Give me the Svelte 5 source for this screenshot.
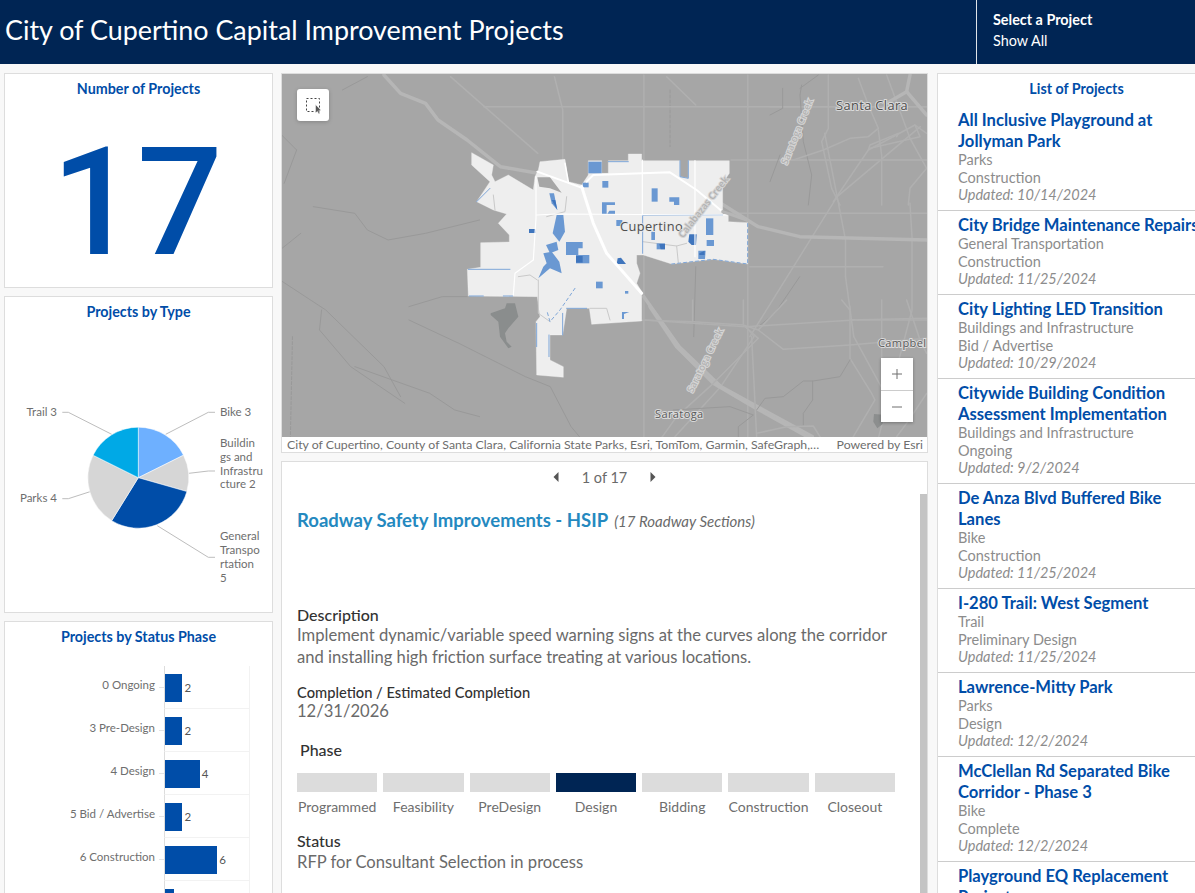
<script lang="ts">
	const navy = '#002554';

	// pie slices, clockwise from 12 o'clock
	const slices = [
		{ value: 3, color: '#6eb0ff' },
		{ value: 2, color: '#d6d6d6' },
		{ value: 5, color: '#004da8' },
		{ value: 4, color: '#d6d6d6' },
		{ value: 3, color: '#00a9e6' }
	];
	const cx = 138.3;
	const cy = 477.7;
	const r = 50.5;
	const total = slices.reduce((sum, s) => sum + s.value, 0);

	function slicePath(start: number, value: number) {
		const a0 = (start / total) * Math.PI * 2;
		const a1 = ((start + value) / total) * Math.PI * 2;
		const large = value / total > 0.5 ? 1 : 0;
		const x0 = cx + r * Math.sin(a0);
		const y0 = cy - r * Math.cos(a0);
		const x1 = cx + r * Math.sin(a1);
		const y1 = cy - r * Math.cos(a1);
		return `M${cx} ${cy}L${x0} ${y0}A${r} ${r} 0 ${large} 1 ${x1} ${y1}Z`;
	}

	let acc = 0;
	const pie = slices.map((s) => {
		const d = slicePath(acc, s.value);
		acc += s.value;
		return { d, color: s.color };
	});

	const leaders = [
		'165.7,434.3 208.3,412.3 215,412.3',
		'189,473.3 208.3,471 215,471',
		'157.3,525.7 208.3,557.3 215,557.3',
		'90,491.7 68.3,498.7 62.3,498.7',
		'111.7,434.3 68.3,412.3 62.3,412.3'
	];

	const phases = [
		{ label: '0 Ongoing', value: 2 },
		{ label: '3 Pre-Design', value: 2 },
		{ label: '4 Design', value: 4 },
		{ label: '5 Bid / Advertise', value: 2 },
		{ label: '6 Construction', value: 6 },
		{ label: '7 Complete', value: 1 }
	];

	const steps = ['Programmed', 'Feasibility', 'PreDesign', 'Design', 'Bidding', 'Construction', 'Closeout'];

	const projects = [
		{ title: 'All Inclusive Playground at Jollyman Park', type: 'Parks', status: 'Construction', updated: '10/14/2024' },
		{ title: 'City Bridge Maintenance Repairs', type: 'General Transportation', status: 'Construction', updated: '11/25/2024' },
		{ title: 'City Lighting LED Transition', type: 'Buildings and Infrastructure', status: 'Bid / Advertise', updated: '10/29/2024' },
		{ title: 'Citywide Building Condition Assessment Implementation', type: 'Buildings and Infrastructure', status: 'Ongoing', updated: '9/2/2024' },
		{ title: 'De Anza Blvd Buffered Bike Lanes', type: 'Bike', status: 'Construction', updated: '11/25/2024' },
		{ title: 'I-280 Trail: West Segment', type: 'Trail', status: 'Preliminary Design', updated: '11/25/2024' },
		{ title: 'Lawrence-Mitty Park', type: 'Parks', status: 'Design', updated: '12/2/2024' },
		{ title: 'McClellan Rd Separated Bike Corridor - Phase 3', type: 'Bike', status: 'Complete', updated: '12/2/2024' },
		{ title: 'Playground EQ Replacement Project', type: 'Parks', status: 'Construction', updated: '12/2/2024' }
	];

	// basemap lines, traced from crops of the map at different scales
	const wideMajor = [
		'250,15 290,70 350,100 380,150 450,210 530,290 620,310',
		'1060,400 1150,470 1250,500 1560,510',
		'875,680 960,830 1060,950 1280,1100'
	];
	const wideMinor = [
		'490,110 1560,110',
		'660,20 680,120 680,270',
		'875,15 875,1100',
		'1125,15 1125,1100',
		'930,20 1000,105',
		'1085,270 1560,270',
		'1080,430 1560,430',
		'875,750 1120,770 1380,750 1560,750',
		'1120,770 1140,800 1060,950 950,1100',
		'1310,190 1340,380 1360,510 1360,620 1380,800 1450,960',
		'1540,170 1340,380 1130,800',
		'1130,590 1450,590',
		'1515,400 1520,500 1520,720 1440,1100',
		'410,20 620,250'
	];
	const wideThin = [
		'0,630 110,720 250,890 290,980',
		'80,410 180,430 210,480 260,510 350,490 480,450',
		'0,540 50,490',
		'100,720 95,780 170,890 300,1000',
		'310,710 390,680 450,680',
		'310,750 430,820 590,920 650,950 700,1070 720,1100',
		'0,190 40,240 10,340',
		'150,60 210,20',
		'1250,620 1190,730 1150,770',
		'1000,590 995,800',
		'180,890 360,970 420,1020 480,1040'
	];

	const cityPoints =
		'65,38 130,75 125,105 135,125 175,105 250,150 255,110 265,90 270,65 345,58 355,125 395,135 415,105 415,62 455,62 455,100 475,100 475,62 535,62 535,42 575,42 575,62 690,62 690,110 715,115 715,62 838,62 838,100 818,130 818,222 835,222 835,245 893,248 893,372 790,358 665,372 580,345 560,345 560,370 570,400 560,430 575,455 575,543 425,553 418,505 350,505 338,585 300,585 300,660 340,680 340,712 260,705 258,545 270,530 262,470 55,468 52,388 92,382 92,308 178,306 178,285 145,250 170,222 130,210 80,185 120,125 65,75';

	const blocks = [
		'415,65 455,65 455,100 415,100',
		'457,123 475,123 475,143 457,143',
		'605,145 623,145 623,185 605,185',
		'658,172 688,172 688,195 672,195 672,185 658,185',
		'456,187 495,187 495,195 470,195 470,222 456,222',
		'478,212 495,212 495,222 472,222',
		'499,240 517,240 517,258 499,258',
		'768,235 790,235 790,285 768,285',
		'770,300 792,300 792,318 770,318',
		'604,275 615,275 615,300 604,300',
		'620,310 645,310 645,328 620,328',
		'745,332 767,332 765,357 745,357',
		'298,160 312,160 322,210 305,190',
		'320,225 340,225 345,275 328,305 308,280',
		'348,306 398,306 398,325 385,325 385,345 348,345',
		'378,345 418,345 418,370 378,370',
		'288,315 320,305 325,330 300,340',
		'280,340 305,335 328,365 335,400 300,385 265,415 280,380 290,370',
		'438,425 458,425 458,445 438,445',
		'525,453 535,453 535,461 525,461',
		'516,516 538,516 522,522 522,537 516,537',
		'398,128 416,128 416,142 398,142'
	];
	const darkBlocks = [
		'237,267 257,267 257,279 237,279',
		'305,180 316,180 322,210',
		'378,348 398,348 398,368 378,368',
		'503,355 513,353 528,372 500,372',
		'718,283 740,283 738,315 725,315 715,305',
		'748,340 764,332 764,345 748,345',
		'628,312 645,312 645,328 632,328'
	];
</script>

<div class="page">
	<header class="topbar">
		<h1>City of Cupertino Capital Improvement Projects</h1>
		<div class="selector">
			<div class="selector-title">Select a Project</div>
			<div class="selector-value">Show All</div>
		</div>
	</header>

	<main class="layout">
		<section class="col-left">
			<div class="card count-card">
				<h2 class="card-title">Number of Projects</h2>
				<div class="big-number">17</div>
			</div>

			<div class="card pie-card">
				<h2 class="card-title">Projects by Type</h2>
				<svg class="pie" viewBox="5 329 267 283" width="267" height="283">
					{#each leaders as line}
						<polyline points={line} fill="none" stroke="#bdbdbd" stroke-width="1" />
					{/each}
					{#each pie as slice}
						<path d={slice.d} fill={slice.color} stroke="#fff" stroke-width="0.5" />
					{/each}
					<text x="220" y="416">Bike 3</text>
					<text x="220" y="447">Buildin</text>
					<text x="220" y="461">gs and</text>
					<text x="220" y="475">Infrastru</text>
					<text x="220" y="488">cture 2</text>
					<text x="220" y="540">General</text>
					<text x="220" y="554">Transpo</text>
					<text x="220" y="568">rtation</text>
					<text x="220" y="582">5</text>
					<text x="57" y="502" text-anchor="end">Parks 4</text>
					<text x="57" y="416" text-anchor="end">Trail 3</text>
				</svg>
			</div>

			<div class="card bars-card">
				<h2 class="card-title">Projects by Status Phase</h2>
				<div class="bars">
					{#each phases as row}
						<div class="bar-row">
							<div class="bar-label">{row.label}</div>
							<div class="bar-plot">
								<div class="bar" style="width: {row.value * 8.7}px"></div>
								<span class="bar-value">{row.value}</span>
							</div>
						</div>
					{/each}
				</div>
			</div>
		</section>

		<section class="col-center">
			<div class="map">
				<svg class="basemap" viewBox="282 74 645 363" width="645" height="363">
					<rect x="282" y="74" width="645" height="363" fill="#a6a6a6" />

					<g transform="translate(280 70) scale(.4158 .3333)" fill="none">
						{#each wideThin as p}<polyline class="thin" points={p} />{/each}
						<polyline class="thin dashed" points="30,800 25,1100" />
						<polyline class="thin dashed" points="938,60 938,230" />
						{#each wideMinor as p}<polyline class="minor" points={p} />{/each}
						{#each wideMajor as p}<polyline class="major" points={p} />{/each}
					</g>

					<g transform="translate(640 300) scale(.3333)" fill="none">
						<polyline class="major" points="30,20 110,140 220,250 340,320 520,420" />
						<polyline class="minor" points="310,0 310,75 355,115 220,250 110,350 60,420" />
						<polyline class="minor" points="0,60 160,65 310,75 355,90 430,148 630,135 860,115" />
						<polyline class="minor" points="335,110 350,410" />
						<polyline class="minor" points="630,20 630,175 695,280 705,300 640,410" />
						<polyline class="minor" points="605,0 630,30" />
						<polyline class="minor" points="630,60 860,55" />
						<polyline class="minor" points="725,0 725,180" />
						<polyline class="minor" points="800,0 840,120 860,160" />
						<polyline class="minor" points="440,0 355,90" />
						<polyline class="minor" points="158,0 158,65" />
						<polyline class="thin" points="630,180 600,230 520,243 490,243 430,290 375,295 350,330" />
						<polyline class="thin" points="518,243 518,300 490,340 490,375" />
						<polyline class="thin" points="100,330 270,320 340,345 295,380 295,410" />
						<polyline class="minor" points="350,400 440,380 520,378 540,410" />
						<polyline class="minor" points="860,280 800,370 770,410" />
						<path d="M702 342 L730 344 L728 372 L712 385 L700 365 Z" fill="#8c8e8e" />
					</g>

					<g transform="translate(770 75) scale(.3333)" fill="none">
						<polyline class="minor" points="0,95 470,95" />
						<polyline class="minor" points="175,0 175,160 155,200 185,340 210,390" />
						<polyline class="thin" points="95,30 90,60 100,200 125,300 115,390" />
						<polyline class="thin" points="145,0 90,40" />
						<polyline class="minor" points="0,255 70,255 160,225 240,190 295,185 325,160 295,90 265,10" />
						<polyline class="minor" points="325,165 335,240 335,390" />
						<polyline class="minor" points="190,380 295,225 435,150 470,175" />
						<polyline class="minor" points="295,225 300,210 385,175 380,185" />
						<polyline class="minor" points="435,150 450,185 300,220" />
						<polyline class="minor" points="350,0 420,190 470,280 420,340 415,390" />
						<polyline class="major" points="420,0 410,50 350,85" />
						<polyline class="major" points="410,50 470,120" />
						<polyline class="thin" points="38,40 38,100 0,120" />
						<polyline class="thin" points="30,240 0,320" />
					</g>

					<g transform="translate(450 140) scale(.3333)">
						<path d="M122 520 L165 505 L170 490 L195 490 L205 530 L175 565 L165 580 L170 605 L185 620 L175 625 L150 590 L145 545 L122 525 Z" fill="#8a8d8d" />
						<polygon points={cityPoints} fill="#eeeeee" stroke="#f6f6f6" stroke-width="1" />
						<path d="M262 112 L300 112 L335 158 L300 145 L268 140 Z" fill="#a6a6a6" />
						<polyline class="road-soft" points="130,165 135,210" />
						<polyline class="road-soft" points="205,410 240,405 262,420" />
						<polyline class="road-soft" points="265,420 265,520 300,545" />
						<polyline class="road-soft" points="578,305 680,318 710,310" />
						<polyline class="road-soft" points="680,318 685,368" />
						<polyline class="road-soft" points="420,505 470,505 480,540" />
						<polyline class="road-soft" points="350,170 345,215 290,230" />
						<polyline class="blue-edge" points="55,388 180,388" />
						<polyline class="blue-edge" points="58,468 100,468" />
						<polyline class="blue-edge" points="160,468 188,468" />
						<polyline class="blue-edge" points="80,185 120,145" />
						<polyline class="blue-edge" points="350,505 410,505" />
						<polyline class="blue-edge" points="338,520 338,585" />
						<polyline class="blue-edge" points="260,550 260,620" />
						<polyline class="blue-edge" points="297,585 297,650" />
						<polyline class="blue-edge" points="475,65 535,65" />
						<polyline class="blue-edge" points="690,62 690,110 715,115 715,62" />
						<polyline class="blue-edge dashed-blue" points="375,445 330,510 300,545 290,510" />
						<polyline class="blue-edge dashed-blue" points="665,372 790,358 893,372 893,250" />
						<polyline class="blue-edge" points="578,225 818,225" />
						<polyline class="blue-edge" points="578,225 578,340" />
						{#each blocks as b}<polygon points={b} fill="#6a98d2" />{/each}
						{#each darkBlocks as b}<polygon points={b} fill="#3f75bd" />{/each}
						<polyline class="road-white" points="395,140 430,250 470,340 575,460" stroke-width="3" />
						<polyline class="road-white" points="262,95 345,125 400,145" stroke-width="2" />
						<polyline class="road-white" points="410,125 430,105 660,97 740,150 818,215" stroke-width="2" />
						<polyline class="road-white" points="260,225 320,222 830,225" stroke-width="1.2" />
						<polyline class="road-white" points="577,60 577,225" stroke-width="1.2" />
						<polyline class="road-white" points="735,62 735,350" stroke-width="1.2" />
						<polyline class="road-white" points="258,110 258,235 250,360 195,400 190,465" stroke-width="1.2" />
						<polyline class="road-white" points="345,70 355,125" stroke-width="1.5" />
						<polyline class="major soft-over" points="818,215 890,240" />
					</g>

					<text class="place" x="836" y="110">Santa Clara</text>
					<text class="place" x="620" y="231">Cupertino</text>
					<text class="place small" x="655" y="418">Saratoga</text>
					<text class="place small" x="878" y="347">Campbel</text>
					<text class="creek" transform="translate(800 133) rotate(-68)">Saratoga Creek</text>
					<text class="creek" transform="translate(708 362) rotate(-64)">Saratoga Creek</text>
					<text class="creek" transform="translate(706 209) rotate(-52)">Calabazas Creek</text>
				</svg>

				<button class="select-tool" aria-label="Select by rectangle">
					<svg viewBox="0 0 32 32" width="32" height="32">
						<rect x="9.5" y="9.5" width="13" height="13" fill="none" stroke="#444" stroke-width="1" stroke-dasharray="2 2" />
						<path d="M18.5 15.5 L18.5 24 L20.4 22.3 L21.7 25 L23 24.3 L21.8 21.7 L24 21.3 Z" fill="#555" stroke="#fff" stroke-width=".5" />
					</svg>
				</button>

				<div class="zoom-tools">
					<button aria-label="Zoom in">
						<svg viewBox="0 0 16 16" width="16" height="16"><path d="M8 3v10M3 8h10" stroke="#6e6e6e" stroke-width="1" fill="none" /></svg>
					</button>
					<button aria-label="Zoom out">
						<svg viewBox="0 0 16 16" width="16" height="16"><path d="M3 8h10" stroke="#6e6e6e" stroke-width="1" fill="none" /></svg>
					</button>
				</div>

				<div class="attribution">
					<span>City of Cupertino, County of Santa Clara, California State Parks, Esri, TomTom, Garmin, SafeGraph,…</span>
					<span>Powered by Esri</span>
				</div>
			</div>

			<div class="details">
				<div class="scroll-thumb"></div>
				<div class="pager">
					<svg viewBox="0 0 8 12" width="8" height="12"><path d="M6.5 1 L1.5 6 L6.5 11 Z" fill="#555" /></svg>
					<span>1 of 17</span>
					<svg viewBox="0 0 8 12" width="8" height="12"><path d="M1.5 1 L6.5 6 L1.5 11 Z" fill="#555" /></svg>
				</div>
				<div class="details-body">
					<div class="project-head">
						<span class="project-name">Roadway Safety Improvements - HSIP</span>
						<em>(17 Roadway Sections)</em>
					</div>

					<h3 class="desc-head">Description</h3>
					<p class="text">Implement dynamic/variable speed warning signs at the curves along the corridor and installing high friction surface treating at various locations.</p>

					<h4 class="completion-head">Completion / Estimated Completion</h4>
					<p class="text">12/31/2026</p>

					<h3 class="phase-head">Phase</h3>
					<div class="steps">
						{#each steps as step}
							<div class="step">
								<div class="step-bar" class:active={step === 'Design'} style:--active={navy}></div>
								<div class="step-label">{step}</div>
							</div>
						{/each}
					</div>

					<h3 class="status-head">Status</h3>
					<p class="text">RFP for Consultant Selection in process</p>
				</div>
			</div>
		</section>

		<section class="col-right">
			<h2 class="card-title">List of Projects</h2>
			<div class="project-list">
				{#each projects as project}
					<article class="project">
						<div class="project-title">{project.title}</div>
						<div class="project-sub type">{project.type}</div>
						<div class="project-sub">{project.status}</div>
						<div class="project-sub updated">Updated: {project.updated}</div>
					</article>
				{/each}
			</div>
		</section>
	</main>
</div>

<style>
	:global(body) {
		margin: 0;
		background: #f8f8f8;
		overflow: hidden;
	}

	.page {
		width: 1195px;
		height: 893px;
		overflow: hidden;
		font-family: Lato, 'Open Sans', sans-serif;
		color: #6a6a6a;
	}

	.topbar {
		height: 64px;
		background: #002554;
		color: #fff;
		display: flex;
		justify-content: space-between;
	}

	h1 {
		margin: 0;
		padding-left: 5px;
		font-size: 26.9px;
		font-weight: 400;
		line-height: 60px;
		white-space: nowrap;
	}

	.selector {
		width: 219px;
		box-sizing: border-box;
		border-left: 1px solid #dfe3e8;
		padding: 9px 0 0 16px;
		font-size: 14.4px;
		line-height: 21px;
	}

	.selector-title {
		font-weight: 700;
	}

	.layout {
		display: grid;
		grid-template-columns: 269px 647px 280px;
		column-gap: 8px;
		padding: 9px 0 0 4px;
		align-items: start;
	}

	.col-left,
	.col-center {
		display: flex;
		flex-direction: column;
		gap: 8px;
	}

	.col-right {
		margin-left: 1px;
		background: #fff;
		border: 1px solid #ddd;
		height: 900px;
		box-sizing: border-box;
	}

	.card {
		background: #fff;
		border: 1px solid #ddd;
		box-sizing: border-box;
		display: flex;
		flex-direction: column;
	}

	.card-title {
		margin: 0;
		height: 32px;
		flex-shrink: 0;
		box-sizing: border-box;
		padding-top: 7px;
		font-size: 14.3px;
		font-weight: 700;
		line-height: 16px;
		text-align: center;
		color: #004da8;
	}

	.count-card {
		height: 215px;
	}

	.big-number {
		flex: 1;
		display: flex;
		align-items: center;
		justify-content: center;
		padding: 12px 3px 0 0;
		font-family: Roboto, sans-serif;
		font-size: 151px;
		line-height: 1;
		font-weight: 500;
		color: #004da8;
	}

	.pie-card {
		height: 317px;
	}

	.pie {
		display: block;
	}

	.pie text {
		font-size: 11.5px;
		fill: #6e6e6e;
	}

	.bars-card {
		height: 320px;
	}

	.bars {
		padding-top: 12px;
	}

	.bar-row {
		display: flex;
		height: 43px;
	}

	.bar-label {
		width: 150px;
		padding-top: 12px;
		font-size: 11.5px;
		line-height: 14px;
		text-align: right;
		color: #6e6e6e;
		white-space: nowrap;
	}

	.bar-plot {
		position: relative;
		margin-left: 9px;
		width: 86px;
		box-sizing: border-box;
		border-left: 1px solid #ddd;
		border-right: 1px solid #f2f2f2;
		border-bottom: 1px solid #f2f2f2;
		padding-top: 8px;
		display: flex;
		align-items: flex-start;
		gap: 2px;
	}

	.bar-plot::before {
		content: '';
		position: absolute;
		left: -6px;
		top: 21px;
		width: 5px;
		height: 1px;
		background: #e4e4e4;
	}

	.bar {
		height: 28px;
		background: #004da8;
	}

	.bar-value {
		font-size: 11.5px;
		line-height: 28px;
		color: #555;
	}

	.map {
		position: relative;
		height: 380px;
		background: #fff;
		border: 1px solid #ddd;
		box-sizing: border-box;
		overflow: hidden;
	}

	.basemap {
		display: block;
	}

	.basemap polyline {
		fill: none;
		stroke-linejoin: round;
		stroke-linecap: round;
	}

	.major,
	.minor,
	.thin,
	.road-soft,
	.road-white,
	.blue-edge {
		vector-effect: non-scaling-stroke;
	}

	.basemap .major {
		stroke: #b6b6b6;
		stroke-width: 3.5;
	}

	.basemap .soft-over {
		stroke-width: 3;
	}

	.basemap .minor {
		stroke: #b0b0b0;
		stroke-width: 1.5;
	}

	.basemap .thin {
		stroke: #999999;
		stroke-width: 1;
	}

	.basemap .dashed {
		stroke-dasharray: 3 2;
	}

	.basemap .road-soft {
		stroke: #c9c9c9;
		stroke-width: 1;
	}

	.basemap .road-white {
		stroke: #ffffff;
	}

	.basemap .blue-edge {
		stroke: #7ea6d8;
		stroke-width: 1;
	}

	.basemap .dashed-blue {
		stroke-dasharray: 3 3;
	}

	.place {
		font-family: 'Open Sans', sans-serif;
		font-size: 12.8px;
		fill: #4e4e4e;
		stroke: rgba(235, 235, 235, 0.75);
		stroke-width: 2px;
		paint-order: stroke;
		letter-spacing: 0.4px;
	}

	.place.small {
		font-size: 11px;
		fill: #5a5a5a;
	}

	.creek {
		font-family: 'Open Sans', sans-serif;
		font-size: 9.5px;
		font-weight: 600;
		text-anchor: middle;
		fill: #b2b2b2;
		stroke: #d6d6d6;
		stroke-width: 2px;
		paint-order: stroke;
	}

	.select-tool {
		position: absolute;
		left: 15px;
		top: 15px;
		width: 32px;
		height: 32px;
		padding: 0;
		border: 0;
		border-radius: 3px;
		background: #fff;
		box-shadow: 0 1px 4px rgba(0, 0, 0, 0.2);
	}

	.select-tool svg,
	.zoom-tools svg {
		display: block;
	}

	.zoom-tools {
		position: absolute;
		right: 14px;
		top: 284px;
		box-shadow: 0 1px 3px rgba(0, 0, 0, 0.3);
	}

	.zoom-tools button {
		display: flex;
		align-items: center;
		justify-content: center;
		width: 32px;
		height: 32px;
		padding: 0;
		border: 0;
		background: #fff;
	}

	.zoom-tools button + button {
		border-top: 1px solid #ccc;
	}

	.attribution {
		display: flex;
		justify-content: space-between;
		height: 15px;
		padding: 0 4px 0 5px;
		background: #fff;
		font-size: 12.3px;
		line-height: 15px;
		color: #6e6e6e;
		white-space: nowrap;
	}

	.details {
		position: relative;
		background: #fff;
		border: 1px solid #ddd;
		height: 500px;
		box-sizing: border-box;
	}

	.scroll-thumb {
		position: absolute;
		right: 0;
		top: 32px;
		bottom: 0;
		width: 7px;
		background: #c4c4c4;
	}

	.pager {
		height: 30px;
		display: flex;
		align-items: center;
		justify-content: center;
		gap: 22px;
		font-size: 14.5px;
		color: #6a6a6a;
	}

	.details-body {
		padding-left: 15px;
		width: 600px;
	}

	.project-head {
		margin-top: 16px;
		height: 24px;
		line-height: 24px;
		white-space: nowrap;
	}

	.project-name {
		font-size: 18.5px;
		font-weight: 700;
		color: #2489bf;
	}

	.project-head em {
		margin-left: 2px;
		font-size: 15px;
		color: #6a6a6a;
	}

	h3,
	h4,
	p {
		margin: 0;
	}

	h3 {
		font-size: 16px;
		font-weight: 500;
		line-height: 21px;
		color: #323232;
	}

	.desc-head {
		margin-top: 73px;
		line-height: 20px;
	}

	.text {
		font-size: 16.6px;
		line-height: 21.5px;
		color: #6a6a6a;
	}

	.completion-head {
		margin-top: 16px;
		font-size: 14.7px;
		font-weight: 500;
		line-height: 17px;
		color: #323232;
	}

	.phase-head {
		margin-top: 16px;
		padding-left: 3px;
	}

	.steps {
		display: flex;
		gap: 6px;
		margin-top: 13px;
		width: 598px;
	}

	.step {
		flex: 1;
		text-align: center;
	}

	.step-bar {
		height: 19px;
		background: #dcdcdc;
	}

	.step-bar.active {
		background: var(--active);
	}

	.step-label {
		margin-top: 6px;
		font-size: 14px;
		line-height: 18px;
		color: #6e6e6e;
		white-space: nowrap;
	}

	.status-head {
		margin-top: 14px;
		line-height: 22px;
	}

	.project {
		padding: 4px 20px 6.5px 20px;
		border-top: 1px solid #ccc;
	}

	.project-list {
		margin-top: -1px;
	}

	.project:first-child {
		border-top: 1px solid transparent;
	}

	.project-title {
		width: 245px;
		font-size: 16.6px;
		font-weight: 700;
		line-height: 21px;
		color: #004da8;
	}

	.project-sub {
		font-size: 14.5px;
		line-height: 17.5px;
		color: #8c8c8c;
		white-space: nowrap;
	}

	.type {
		margin-top: -1px;
	}

	.updated {
		font-style: italic;
	}
</style>
